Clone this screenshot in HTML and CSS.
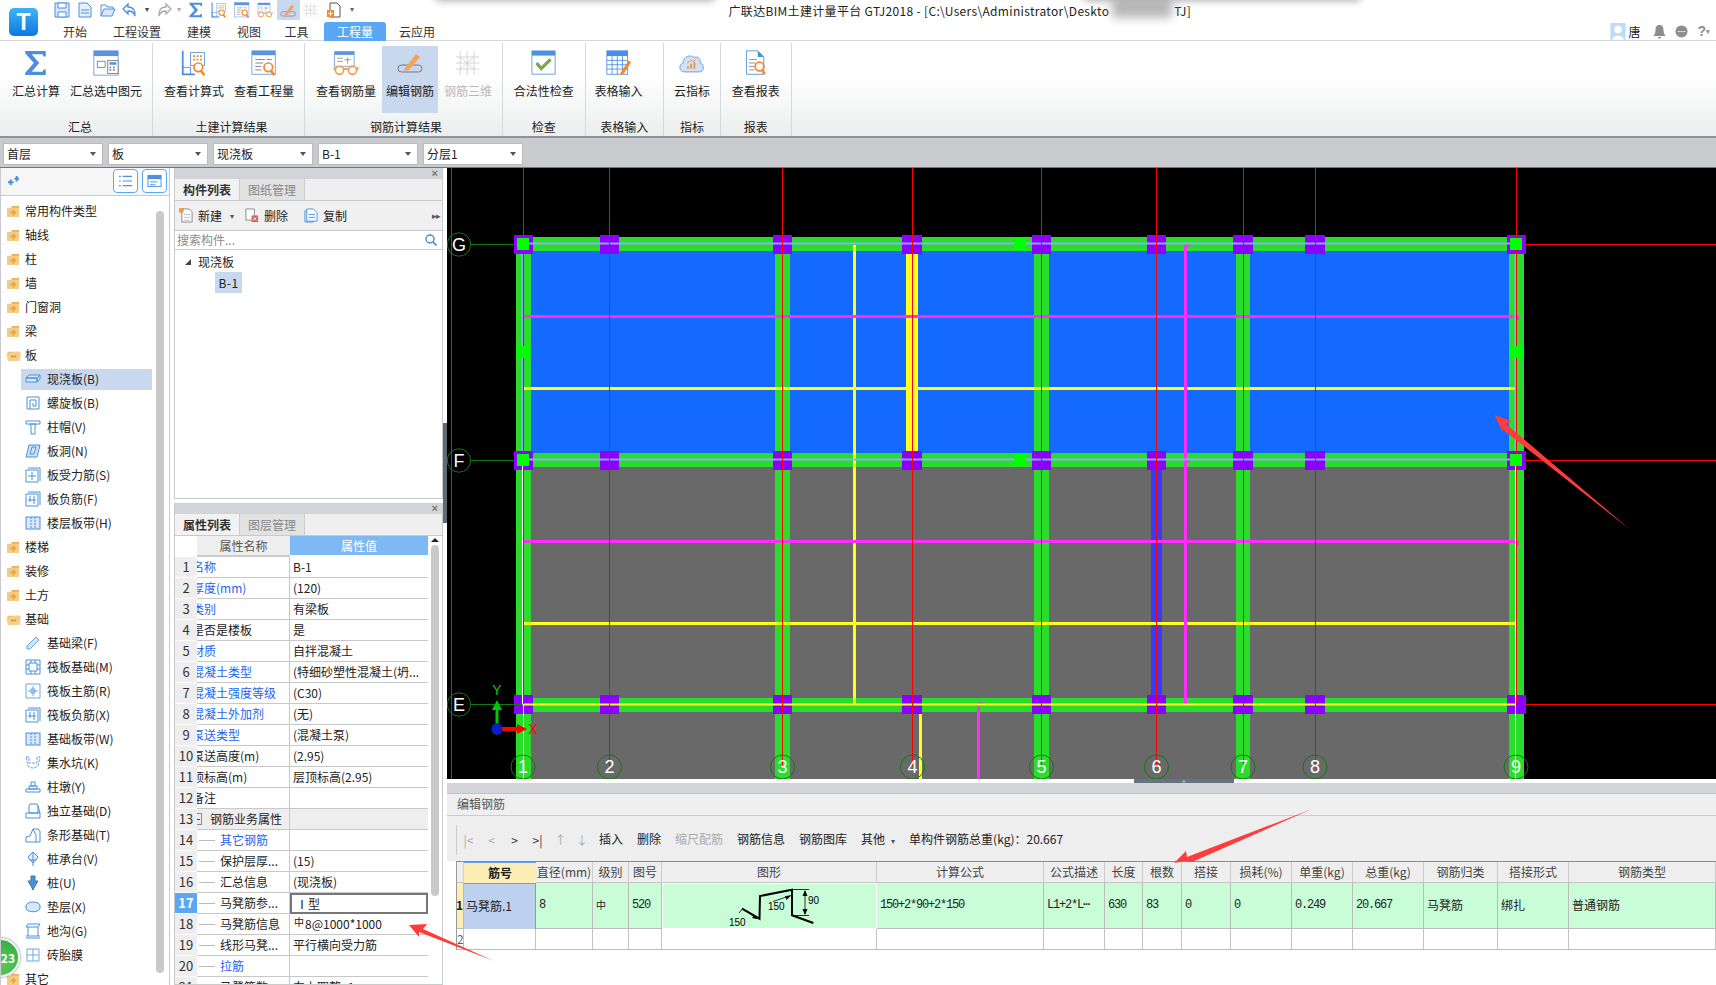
FILE: index.html
```html
<!DOCTYPE html>
<html lang="zh-CN">
<head>
<meta charset="utf-8">
<title>广联达BIM土建计量平台 GTJ2018</title>
<link rel="stylesheet" href="styles.css">
</head>
<body>
<svg class="defs" aria-hidden="true">
  <defs>
    <symbol id="folder" viewBox="0 0 16 14"><path d="M1 3h5V1h8v12H1z" fill="#f1cd85"/><path d="M6 3V1h8v2z" fill="#e3b461"/><path d="M7 5h2v2h2v2H9v2H7V9H5V7h2z" fill="#e8a33a"/></symbol>
    <symbol id="folder-open" viewBox="0 0 16 14"><path d="M2 3h13v3H2z" fill="#e3b461"/><path d="M0 4l13-1 3 0-1.500 10H2z" fill="#f3d18c"/><path d="M5 7h6v2H5z" fill="#dd9d3c"/></symbol>
    <symbol id="i-slab" viewBox="0 0 16 16"><path d="M1 7l3-3h11l-3 3zM1 7h11v4H1zM12 7v4l3-3V4" fill="#d8e8fa" stroke="#4a90d9"/></symbol>
    <symbol id="i-spiral" viewBox="0 0 16 16"><path d="M2 2h12v12H2zM5 14V5h6v6H8V8" fill="none" stroke="#4a90d9"/></symbol>
    <symbol id="i-cap" viewBox="0 0 16 16"><path d="M1 2h14v3H1zM5 5h6l-1 2v8H6V7z" fill="#fff" stroke="#4a90d9"/></symbol>
    <symbol id="i-hole" viewBox="0 0 16 16"><path d="M1 14l3-12h11l-3 12zM5 11l2-7h4l-2 7z" fill="#cfe2f7" stroke="#4a90d9"/></symbol>
    <symbol id="i-main" viewBox="0 0 16 16"><path d="M3 1h12v13M1 3h12v12H1zM3 9h8M7 5v8" fill="none" stroke="#4a90d9"/></symbol>
    <symbol id="i-neg" viewBox="0 0 16 16"><path d="M3 1h12v13M1 3h12v12H1zM3 9h8M5 5v6M9 5v8" fill="none" stroke="#4a90d9"/></symbol>
    <symbol id="i-band" viewBox="0 0 16 16"><rect x="1" y="2" width="14" height="12" fill="#d8e8fa" stroke="#4a90d9"/><path d="M6 2v12M10 2v12" stroke="#4a90d9" stroke-dasharray="2 1"/></symbol>
    <symbol id="i-beam" viewBox="0 0 16 16"><path d="M2 11L11 2l3 3-9 9H2z" fill="#cfe2f7" stroke="#6aa6e4"/></symbol>
    <symbol id="i-raft" viewBox="0 0 16 16"><path d="M1 1h14v14H1zM4 4h8v8H4zM1 6h3M1 10h3M12 6h3M12 10h3M6 1v3M10 1v3M6 12v3M10 12v3" fill="none" stroke="#4a90d9"/></symbol>
    <symbol id="i-raft2" viewBox="0 0 16 16"><path d="M1 1h14v14H1zM8 3v10M3 8h10M6 6h4v4H6z" fill="none" stroke="#6aa6e4"/></symbol>
    <symbol id="i-pit" viewBox="0 0 16 16"><path d="M1 2h3v6h8V2h3M1 2l2 9q5 4 10 0l2-9" fill="none" stroke="#6aa6e4" stroke-dasharray="3 1"/></symbol>
    <symbol id="i-pier" viewBox="0 0 16 16"><path d="M6 3h4v4H6zM4 7h8v3H4zM1 10h14v3H1z" fill="#fff" stroke="#4a90d9"/></symbol>
    <symbol id="i-indep" viewBox="0 0 16 16"><path d="M5 1h7l1 2v7H4V3zM1 10h14v5H1zM13 3l2 7" fill="#fff" stroke="#4a90d9"/></symbol>
    <symbol id="i-strip" viewBox="0 0 16 16"><path d="M1 15V10l4-1 3-7h5l2 2v11zM8 2l3 6v7" fill="#fff" stroke="#4a90d9"/></symbol>
    <symbol id="i-cap2" viewBox="0 0 16 16"><path d="M8 1l5 5-2 3H5L3 6zM8 1v14M5 9l3 3 3-3" fill="#e8f1fb" stroke="#4a90d9"/></symbol>
    <symbol id="i-pile" viewBox="0 0 16 16"><path d="M6 1h4v5h3l-3 5-2 4-2-4-3-5h3z" fill="#4a90d9" stroke="#3674b5"/></symbol>
    <symbol id="i-cush" viewBox="0 0 16 16"><ellipse cx="8" cy="7" rx="7" ry="4" fill="#d8e8fa" stroke="#4a90d9"/><path d="M1 7v2c0 5 14 5 14 0V7" fill="#d8e8fa" stroke="#4a90d9"/></symbol>
    <symbol id="i-trench" viewBox="0 0 16 16"><path d="M3 1h12l-2 3H1zM3 4v9M13 4v9M1 15h14M1 13h14" fill="none" stroke="#4a90d9"/></symbol>
    <symbol id="i-brick" viewBox="0 0 16 16"><path d="M2 2h12v12H2zM8 2v12M2 8h12" fill="none" stroke="#6aa6e4"/></symbol>

    <symbol id="sigma" viewBox="0 0 24 24"><path d="M2 1h19v5h-2l-1-2H8l7 8-7 8h10l1-2h2v5H2v-2l8-9-8-9z" fill="#4a8fe0"/></symbol>
    <symbol id="r-sumsel" viewBox="0 0 30 30"><rect x="1" y="1" width="28" height="28" fill="#fff" stroke="#6a9bd8"/><rect x="1" y="1" width="28" height="6" fill="#5b94dc"/><rect x="5" y="13" width="9" height="7" fill="none" stroke="#7a7a7a"/><rect x="17" y="12" width="12" height="15" fill="#fff" stroke="#777"/><rect x="19" y="14" width="8" height="3" fill="#5b94dc"/><path d="M19 20h2M23 20h2M19 23h2M23 23h2" stroke="#888" stroke-width="2"/></symbol>
    <symbol id="r-calc" viewBox="0 0 30 30"><path d="M2 1v27h14" fill="none" stroke="#4a8fe0" stroke-width="2"/><rect x="2" y="20" width="9" height="8" fill="none" stroke="#4a8fe0"/><rect x="11" y="3" width="16" height="15" fill="#fff" stroke="#5b94dc"/><path d="M14 7h2M18 7h2M22 7h2M14 11h2M18 11h2M22 11h2" stroke="#e87f2a" stroke-width="2"/><circle cx="20" cy="20" r="5" fill="#fff" stroke="#f08a2c" stroke-width="2"/><path d="M23 24l4 5" stroke="#f08a2c" stroke-width="3"/></symbol>
    <symbol id="r-qty" viewBox="0 0 30 30"><rect x="1" y="1" width="27" height="27" fill="#fff" stroke="#6a9bd8"/><rect x="1" y="1" width="27" height="5" fill="#5b94dc"/><path d="M5 11h11M5 15h9M5 19h7M5 23h7M18 11h6" stroke="#777"/><circle cx="20" cy="20" r="5" fill="#fff" stroke="#f08a2c" stroke-width="2"/><path d="M23 24l4 5" stroke="#f08a2c" stroke-width="3"/></symbol>
    <symbol id="r-rebar" viewBox="0 0 32 30"><rect x="2" y="1" width="24" height="18" fill="#fff" stroke="#6a9bd8"/><rect x="2" y="1" width="24" height="4" fill="#5b94dc"/><path d="M5 9h7M5 13h7M18 8v8M14 11h8" stroke="#888"/><circle cx="8" cy="24" r="5" fill="#fff" stroke="#f39a4c" stroke-width="2"/><circle cx="24" cy="24" r="5" fill="#fff" stroke="#f39a4c" stroke-width="2"/><path d="M13 23q3-2 6 0M3 24l-2-4M29 24l2-4" fill="none" stroke="#f39a4c" stroke-width="2"/></symbol>
    <symbol id="r-edit" viewBox="0 0 26 22"><rect x="1" y="13" width="24" height="7" rx="3.500" fill="none" stroke="#777"/><path d="M8 16L19 2l4 3-11 13-5 1z" fill="#f5a25c"/></symbol>
    <symbol id="r-3d" viewBox="0 0 30 30"><path d="M6 1v28M14 1v28M22 1v28M1 8h27M1 15h27M1 22h27M6 8l16 14M6 22L22 8" fill="none" stroke="#cfcfcf"/></symbol>
    <symbol id="r-check" viewBox="0 0 28 28"><rect x="1" y="1" width="25" height="25" fill="#fff" stroke="#6a9bd8"/><rect x="1" y="1" width="25" height="5" fill="#4a8fe0"/><path d="M6 14l5 6 10-10" fill="none" stroke="#7aa84a" stroke-width="3.500"/></symbol>
    <symbol id="r-table" viewBox="0 0 30 30"><rect x="1" y="1" width="24" height="27" fill="#fff" stroke="#4a8fe0"/><rect x="1" y="1" width="24" height="6" fill="#4a8fe0"/><path d="M1 12h24M1 17h24M1 22h24M7 7v21M13 7v21M19 7v21" stroke="#4a8fe0"/><path d="M17 26l9-14 3 2-9 14-4 1z" fill="#f08a2c"/></symbol>
    <symbol id="r-cloud" viewBox="0 0 32 28"><path d="M7 25C0 25-1 16 5 14 5 6 14 3 18 7c6-2 9 3 8 7 6 2 5 11-1 11z" fill="#cfe2f7" stroke="#5b94dc"/><path d="M11 21v-3M15 21v-6M19 21v-8" stroke="#f08a2c" stroke-width="2"/><path d="M10 14l5-3 3 1 3-3" fill="none" stroke="#f08a2c"/></symbol>
    <symbol id="r-report" viewBox="0 0 26 30"><path d="M2 1h13l7 7v20H2z" fill="#fff" stroke="#4a8fe0"/><path d="M15 1l7 7h-7z" fill="#4a8fe0"/><path d="M5 11h9M5 15h7M5 19h6M5 23h6" stroke="#888"/><circle cx="17" cy="19" r="5" fill="#fff" stroke="#f08a2c" stroke-width="2"/><path d="M20 23l3 5" stroke="#f08a2c" stroke-width="3"/></symbol>
  </defs>
</svg>

<header class="header">
  <div class="logo-box">
    <div class="logo"><span class="logo-t">T</span></div>
  </div>
  <div class="head-right">
    <div class="quick">
      <svg class="qb" viewBox="0 0 16 16"><path d="M1 1h14v14H1z" fill="#d8e8fa" stroke="#4a8fe0"/><path d="M4 1h8v5H4zM4 10h8v5H4z" fill="#fff" stroke="#4a8fe0"/></svg>
      <svg class="qb" viewBox="0 0 16 16"><path d="M2 1h8l4 4v10H2z" fill="#e6f0fb" stroke="#4a8fe0"/><path d="M4 8h8M4 11h8" stroke="#4a8fe0"/></svg>
      <svg class="qb" viewBox="0 0 16 16"><path d="M1 14V3h5l1 2h6v2" fill="#fff" stroke="#4a8fe0"/><path d="M1 14l3-7h11l-3 7z" fill="#d8e8fa" stroke="#4a8fe0"/></svg>
      <svg class="qb qb-narrow" viewBox="0 0 16 16"><path d="M6 2L1 7l5 5V9c4 0 6 1 7 5 1-5-2-9-7-9z" fill="#fff" stroke="#4a8fe0" stroke-width="1.300"/></svg>
      <span class="qcaret">▾</span>
      <svg class="qb" viewBox="0 0 16 16"><path d="M10 2l5 5-5 5V9C6 9 4 10 3 14 2 9 5 5 10 5z" fill="#fff" stroke="#aaa" stroke-width="1.300"/></svg>
      <span class="qcaret qcaret-light">▾</span>
      <svg class="qb qb-sigma"><use href="#sigma"/></svg>
      <svg class="qb"><use href="#r-calc"/></svg>
      <svg class="qb"><use href="#r-qty"/></svg>
      <svg class="qb"><use href="#r-rebar"/></svg>
      <span class="qb-on"><svg class="qb-in"><use href="#r-edit"/></svg></span>
      <svg class="qb"><use href="#r-3d"/></svg>
      <svg class="qb" viewBox="0 0 16 16"><path d="M4 1h7l3 3v11H4z" fill="#fff" stroke="#555"/><rect x="1" y="8" width="7" height="7" fill="#f08a2c"/><path d="M4.500 9v5M2 11.500h5" stroke="#fff"/></svg>
      <span class="qcaret qcaret-more">▾</span>
      <span class="title">广联达BIM土建计量平台 GTJ2018 - [C:\Users\Administrator\Deskto<span class="title-gap"></span>TJ]</span>
    </div>
    <div class="tabrow">
      <nav class="tabs">
        <span class="tab">开始</span><span class="tab">工程设置</span><span class="tab">建模</span><span class="tab">视图</span><span class="tab">工具</span><span class="tab tab-on">工程量</span><span class="tab">云应用</span>
      </nav>
      <div class="user">
        <svg class="avatar" viewBox="0 0 16 18"><rect width="16" height="18" fill="#bcdcfb"/><circle cx="8" cy="7" r="4" fill="#fff"/><path d="M2 18c0-6 12-6 12 0z" fill="#fff"/></svg>
        <span class="user-name">唐</span>
        <svg class="u-ico" viewBox="0 0 12 14"><path d="M6 0c3 0 4 2 4 5s1 4 2 6H0c1-2 2-3 2-6s1-5 4-5zM4 12h4l-2 2z" fill="#8d8d8d"/></svg>
        <svg class="u-ico" viewBox="0 0 14 14"><circle cx="7" cy="6.500" r="6.500" fill="#8d8d8d"/><path d="M3 6.500h2M6 6.500h2M9 6.500h2" stroke="#fff"/></svg>
        <span class="help">?<small>▾</small></span>
      </div>
    </div>
  </div>
</header>

<section class="ribbon">
  <div class="rgroup g1">
    <div class="rbtns"><div class="rbtn w56"><svg class="ric"><use href="#sigma"/></svg><span>汇总计算</span></div><div class="rbtn w84"><svg class="ric"><use href="#r-sumsel"/></svg><span>汇总选中图元</span></div></div>
    <div class="rlabel">汇总</div>
  </div>
  <div class="rgroup g2">
    <div class="rbtns"><div class="rbtn w70"><svg class="ric"><use href="#r-calc"/></svg><span>查看计算式</span></div><div class="rbtn w70"><svg class="ric"><use href="#r-qty"/></svg><span>查看工程量</span></div></div>
    <div class="rlabel">土建计算结果</div>
  </div>
  <div class="rgroup g3">
    <div class="rbtns"><div class="rbtn w72"><svg class="ric"><use href="#r-rebar"/></svg><span>查看钢筋量</span></div><div class="rbtn w56 rbtn-on"><svg class="ric"><use href="#r-edit"/></svg><span>编辑钢筋</span></div><div class="rbtn w60 rbtn-off"><svg class="ric"><use href="#r-3d"/></svg><span>钢筋三维</span></div></div>
    <div class="rlabel">钢筋计算结果</div>
  </div>
  <div class="rgroup g4">
    <div class="rbtns"><div class="rbtn wfull"><svg class="ric"><use href="#r-check"/></svg><span>合法性检查</span></div></div>
    <div class="rlabel">检查</div>
  </div>
  <div class="rgroup g5">
    <div class="rbtns"><div class="rbtn w66"><svg class="ric"><use href="#r-table"/></svg><span>表格输入</span></div></div>
    <div class="rlabel">表格输入</div>
  </div>
  <div class="rgroup g6">
    <div class="rbtns"><div class="rbtn wfull"><svg class="ric"><use href="#r-cloud"/></svg><span>云指标</span></div></div>
    <div class="rlabel">指标</div>
  </div>
  <div class="rgroup g7">
    <div class="rbtns"><div class="rbtn wfull"><svg class="ric"><use href="#r-report"/></svg><span>查看报表</span></div></div>
    <div class="rlabel">报表</div>
  </div>
</section>

<div class="combos">
  <div class="combo">首层</div>
  <div class="combo">板</div>
  <div class="combo">现浇板</div>
  <div class="combo">B-1</div>
  <div class="combo">分层1</div>
</div>

<main class="main">
  <aside class="tree">
    <div class="tree-top">
      <svg class="pin" viewBox="0 0 14 12"><path d="M1 8h6M4 5v6M8 4h5M10.500 1v6" stroke="#4a8fe0" stroke-width="2.200"/></svg>
      <span class="view-btn"><svg viewBox="0 0 16 14"><path d="M1 2h2M5 2h10M1 7h2M5 7h10M1 12h2M5 12h10" stroke="#4a8fe0" stroke-width="1.300"/></svg></span>
      <span class="view-btn"><svg viewBox="0 0 16 14"><rect x="1" y="1" width="14" height="12" fill="#fff" stroke="#4a8fe0"/><rect x="1" y="1" width="14" height="4" fill="#4a8fe0"/><path d="M3 8h8M3 11h6" stroke="#4a8fe0"/></svg></span>
    </div>
    <div class="t-list">
      <div class="t-row"><svg class="t-f"><use href="#folder"/></svg>常用构件类型</div>
      <div class="t-row"><svg class="t-f"><use href="#folder"/></svg>轴线</div>
      <div class="t-row"><svg class="t-f"><use href="#folder"/></svg>柱</div>
      <div class="t-row"><svg class="t-f"><use href="#folder"/></svg>墙</div>
      <div class="t-row"><svg class="t-f"><use href="#folder"/></svg>门窗洞</div>
      <div class="t-row"><svg class="t-f"><use href="#folder"/></svg>梁</div>
      <div class="t-row"><svg class="t-f"><use href="#folder-open"/></svg>板</div>
      <div class="t-child t-sel"><svg class="t-i"><use href="#i-slab"/></svg>现浇板(B)</div>
      <div class="t-child"><svg class="t-i"><use href="#i-spiral"/></svg>螺旋板(B)</div>
      <div class="t-child"><svg class="t-i"><use href="#i-cap"/></svg>柱帽(V)</div>
      <div class="t-child"><svg class="t-i"><use href="#i-hole"/></svg>板洞(N)</div>
      <div class="t-child"><svg class="t-i"><use href="#i-main"/></svg>板受力筋(S)</div>
      <div class="t-child"><svg class="t-i"><use href="#i-neg"/></svg>板负筋(F)</div>
      <div class="t-child"><svg class="t-i"><use href="#i-band"/></svg>楼层板带(H)</div>
      <div class="t-row"><svg class="t-f"><use href="#folder"/></svg>楼梯</div>
      <div class="t-row"><svg class="t-f"><use href="#folder"/></svg>装修</div>
      <div class="t-row"><svg class="t-f"><use href="#folder"/></svg>土方</div>
      <div class="t-row"><svg class="t-f"><use href="#folder-open"/></svg>基础</div>
      <div class="t-child"><svg class="t-i"><use href="#i-beam"/></svg>基础梁(F)</div>
      <div class="t-child"><svg class="t-i"><use href="#i-raft"/></svg>筏板基础(M)</div>
      <div class="t-child"><svg class="t-i"><use href="#i-raft2"/></svg>筏板主筋(R)</div>
      <div class="t-child"><svg class="t-i"><use href="#i-neg"/></svg>筏板负筋(X)</div>
      <div class="t-child"><svg class="t-i"><use href="#i-band"/></svg>基础板带(W)</div>
      <div class="t-child"><svg class="t-i"><use href="#i-pit"/></svg>集水坑(K)</div>
      <div class="t-child"><svg class="t-i"><use href="#i-pier"/></svg>柱墩(Y)</div>
      <div class="t-child"><svg class="t-i"><use href="#i-indep"/></svg>独立基础(D)</div>
      <div class="t-child"><svg class="t-i"><use href="#i-strip"/></svg>条形基础(T)</div>
      <div class="t-child"><svg class="t-i"><use href="#i-cap2"/></svg>桩承台(V)</div>
      <div class="t-child"><svg class="t-i"><use href="#i-pile"/></svg>桩(U)</div>
      <div class="t-child"><svg class="t-i"><use href="#i-cush"/></svg>垫层(X)</div>
      <div class="t-child"><svg class="t-i"><use href="#i-trench"/></svg>地沟(G)</div>
      <div class="t-child"><svg class="t-i"><use href="#i-brick"/></svg>砖胎膜</div>
      <div class="t-row"><svg class="t-f"><use href="#folder"/></svg>其它</div>
    </div>
    <div class="t-scroll"></div>
    <div class="badge">23</div>
  </aside>

  <section class="mid">
    <div class="panel panel-top">
      <div class="p-head">×</div>
      <div class="p-tabs"><span class="p-tab p-tab-on">构件列表</span><span class="p-tab">图纸管理</span></div>
      <div class="p-tools">
        <svg class="p-ico" viewBox="0 0 15 16"><path d="M3 1h8l3 3v11H3z" fill="#fff" stroke="#888"/><path d="M5 7h7M5 10h7M5 13h7" stroke="#bbb"/><path d="M0 0h5v5H0z" fill="#f08a2c" opacity=".8"/></svg>
        <span class="p-t">新建</span><span class="p-caret">▾</span>
        <svg class="p-ico p-del" viewBox="0 0 15 16"><path d="M1 1h9v12H1z" fill="#fff" stroke="#888"/><rect x="7" y="8" width="7" height="7" fill="#e8554e"/><path d="M8.500 9.500l4 4m0-4l-4 4" stroke="#fff"/></svg>
        <span class="p-t">删除</span>
        <svg class="p-ico p-copy" viewBox="0 0 15 16"><path d="M1 3h2M1 3v12h9v-1" fill="none" stroke="#4a8fe0"/><path d="M3 1h7l4 4v9H3z" fill="#fff" stroke="#4a8fe0"/><path d="M5 7h7M5 10h7" stroke="#4a8fe0"/></svg>
        <span class="p-t">复制</span>
        <span class="p-more">▸▸</span>
      </div>
      <div class="p-search"><span>搜索构件...</span><svg class="p-mag" viewBox="0 0 12 12"><circle cx="5" cy="5" r="4" fill="none" stroke="#3a8fd0" stroke-width="1.400"/><path d="M8 8l3.500 3.500" stroke="#3a8fd0" stroke-width="1.600"/></svg></div>
      <div class="p-tree">
        <div class="pt-root"><span class="pt-tri"></span>现浇板</div>
        <div class="pt-leaf">B-1</div>
      </div>
    </div>

    <div class="panel panel-bot">
      <div class="p-head">×</div>
      <div class="p-tabs"><span class="p-tab p-tab-on">属性列表</span><span class="p-tab">图层管理</span></div>
      <div class="props">
        <div class="prop-head"><span class="pr-n pr-blank"></span><span class="ph-name">属性名称</span><span class="ph-val">属性值</span></div>
        <div class="pr"><span class="pr-n">1</span><span class="pr-k link"><b>名称</b></span><span class="pr-v">B-1</span></div>
        <div class="pr"><span class="pr-n">2</span><span class="pr-k link"><b>厚度(mm)</b></span><span class="pr-v">(120)</span></div>
        <div class="pr"><span class="pr-n">3</span><span class="pr-k link"><b>类别</b></span><span class="pr-v">有梁板</span></div>
        <div class="pr"><span class="pr-n">4</span><span class="pr-k"><b>是否是楼板</b></span><span class="pr-v">是</span></div>
        <div class="pr"><span class="pr-n">5</span><span class="pr-k link"><b>材质</b></span><span class="pr-v">自拌混凝土</span></div>
        <div class="pr"><span class="pr-n">6</span><span class="pr-k link"><b>混凝土类型</b></span><span class="pr-v">(特细砂塑性混凝土(坍...</span></div>
        <div class="pr"><span class="pr-n">7</span><span class="pr-k link"><b>混凝土强度等级</b></span><span class="pr-v">(C30)</span></div>
        <div class="pr"><span class="pr-n">8</span><span class="pr-k link"><b>混凝土外加剂</b></span><span class="pr-v">(无)</span></div>
        <div class="pr"><span class="pr-n">9</span><span class="pr-k link"><b>泵送类型</b></span><span class="pr-v">(混凝土泵)</span></div>
        <div class="pr"><span class="pr-n">10</span><span class="pr-k"><b>泵送高度(m)</b></span><span class="pr-v">(2.95)</span></div>
        <div class="pr"><span class="pr-n">11</span><span class="pr-k"><b>顶标高(m)</b></span><span class="pr-v">层顶标高(2.95)</span></div>
        <div class="pr"><span class="pr-n">12</span><span class="pr-k"><b>备注</b></span><span class="pr-v"></span></div>
        <div class="pr pr-group"><span class="pr-n">13</span><span class="pr-k pr-gk"><i class="pr-minus"></i>钢筋业务属性</span><span class="pr-v"></span></div>
        <div class="pr"><span class="pr-n">14</span><span class="pr-k pr-sub link">其它钢筋</span><span class="pr-v"></span></div>
        <div class="pr"><span class="pr-n">15</span><span class="pr-k pr-sub">保护层厚...</span><span class="pr-v">(15)</span></div>
        <div class="pr"><span class="pr-n">16</span><span class="pr-k pr-sub">汇总信息</span><span class="pr-v">(现浇板)</span></div>
        <div class="pr pr-active"><span class="pr-n">17</span><span class="pr-k pr-sub">马凳筋参...</span><span class="pr-v">Ⅰ型</span></div>
        <div class="pr"><span class="pr-n">18</span><span class="pr-k pr-sub">马凳筋信息</span><span class="pr-v"><sup class="rebar-mark">中</sup>8@1000*1000</span></div>
        <div class="pr"><span class="pr-n">19</span><span class="pr-k pr-sub">线形马凳...</span><span class="pr-v">平行横向受力筋</span></div>
        <div class="pr"><span class="pr-n">20</span><span class="pr-k pr-sub link">拉筋</span><span class="pr-v"></span></div>
        <div class="pr"><span class="pr-n">21</span><span class="pr-k pr-sub">马凳筋数...</span><span class="pr-v">向上取整+1</span></div>
        <div class="p-scroll"></div>
        <div class="p-scroll-up"></div>
      </div>
    </div>
  </section>

  <div class="vsplit"><div class="vsplit-grip"></div></div>

  <section class="work">
    <svg class="cad" viewBox="447 168 1269 611" preserveAspectRatio="none">
      <rect class="c-blue" x="531" y="251" width="978" height="202"/>
      <rect class="c-gray" x="531" y="467" width="978" height="312"/>
      <g class="c-beam">
        <rect x="516" y="237" width="1008" height="14"/>
        <rect x="516" y="453" width="1008" height="14"/>
        <rect x="516" y="698" width="1008" height="14"/>
        <rect x="516" y="237" width="15" height="542"/>
        <rect x="775" y="237" width="15" height="542"/>
        <rect x="1034" y="237" width="15" height="542"/>
        <rect x="1236" y="237" width="14" height="542"/>
        <rect x="1509" y="237" width="15" height="542"/>
      </g>
      <rect class="c-rblue" x="1151" y="467" width="11" height="231"/>
      <rect class="c-yellow" x="906" y="251" width="12" height="202"/>
      <g class="c-ln-y">
        <line x1="524" y1="388.500" x2="1515" y2="388.500"/>
        <line x1="524" y1="623.500" x2="1515" y2="623.500"/>
        <line x1="854.500" y1="245" x2="854.500" y2="704"/>
        <line x1="920.500" y1="705" x2="920.500" y2="779"/>
      </g>
      <g class="c-ln-m">
        <line x1="524" y1="316.500" x2="1518" y2="316.500"/>
        <line x1="524" y1="541.500" x2="1518" y2="541.500"/>
        <line x1="1185.500" y1="245" x2="1185.500" y2="704"/>
        <line x1="978.500" y1="704" x2="978.500" y2="779"/>
      </g>
      <path class="c-tick" d="M1185 245.500h5M1185 461.500h5M1185 703.500h5M978 703.500h6M1518 316v4M1518 541v4"/>
      <g class="c-ln-s">
        <line x1="522.500" y1="244" x2="522.500" y2="460"/>
        <line x1="1515.500" y1="244" x2="1515.500" y2="460"/>
      </g>
      <g class="c-col">
        <rect x="514" y="235" width="19" height="19"/><rect x="600" y="235" width="19" height="19"/><rect x="773" y="235" width="19" height="19"/><rect x="902" y="235" width="20" height="19"/><rect x="1032" y="235" width="19" height="19"/><rect x="1147" y="235" width="19" height="19"/><rect x="1233" y="235" width="20" height="19"/><rect x="1305" y="235" width="20" height="19"/><rect x="1507" y="235" width="19" height="19"/>
        <rect x="514" y="451" width="19" height="19"/><rect x="600" y="451" width="19" height="19"/><rect x="773" y="451" width="19" height="19"/><rect x="902" y="451" width="20" height="19"/><rect x="1032" y="451" width="19" height="19"/><rect x="1147" y="451" width="19" height="19"/><rect x="1233" y="451" width="20" height="19"/><rect x="1305" y="451" width="20" height="19"/><rect x="1507" y="451" width="19" height="19"/>
        <rect x="514" y="695" width="19" height="19"/><rect x="600" y="695" width="19" height="19"/><rect x="773" y="695" width="19" height="19"/><rect x="902" y="695" width="20" height="19"/><rect x="1032" y="695" width="19" height="19"/><rect x="1147" y="695" width="19" height="19"/><rect x="1233" y="695" width="20" height="19"/><rect x="1305" y="695" width="20" height="19"/><rect x="1507" y="695" width="19" height="19"/>
      </g>
      <g class="c-ln-s">
        <line x1="524" y1="243.500" x2="1516" y2="243.500"/>
        <line x1="524" y1="459.500" x2="1516" y2="459.500"/>
      </g>
      <line class="c-y2" x1="522.500" y1="704.500" x2="1516" y2="704.500"/>
      <line class="c-y1" x1="523.500" y1="704" x2="523.500" y2="779"/>
      <line class="c-y1" x1="1515.500" y1="704" x2="1515.500" y2="779"/>
      <line class="c-w1" x1="522.500" y1="460" x2="522.500" y2="704"/>
      <line class="c-w1" x1="1515.500" y1="460" x2="1515.500" y2="704"/>
      <g class="c-red">
        <line x1="523.500" y1="168" x2="523.500" y2="704"/><line x1="609.500" y1="168" x2="609.500" y2="766"/><line x1="782.500" y1="168" x2="782.500" y2="766"/><line x1="912.500" y1="168" x2="912.500" y2="766"/><line x1="1041.500" y1="168" x2="1041.500" y2="766"/><line x1="1156.500" y1="168" x2="1156.500" y2="766"/><line x1="1243.500" y1="168" x2="1243.500" y2="766"/><line x1="1315.500" y1="168" x2="1315.500" y2="766"/><line x1="1516.500" y1="168" x2="1516.500" y2="704"/>
        <line x1="1526" y1="244.500" x2="1716" y2="244.500"/><line x1="1526" y1="460.500" x2="1716" y2="460.500"/><line x1="1526" y1="704.500" x2="1716" y2="704.500"/>
      </g>
      <g class="c-pt">
        <rect x="517" y="238" width="12" height="12"/><rect x="517" y="454" width="12" height="12"/><rect x="516.500" y="346" width="13" height="12"/>
        <rect x="1014" y="238" width="12" height="12"/><rect x="1014" y="454" width="12" height="12"/>
        <rect x="1510" y="238" width="12" height="12"/><rect x="1510" y="454" width="12" height="12"/><rect x="1510" y="346" width="13" height="12"/>
      </g>
      <g class="c-dgreen">
        <line x1="451.500" y1="168" x2="451.500" y2="779"/>
        <line x1="471" y1="244.500" x2="514" y2="244.500"/><line x1="471" y1="460.500" x2="514" y2="460.500"/><line x1="471" y1="704.500" x2="522" y2="704.500"/>
      </g>
      <g class="c-bub">
        <circle cx="459" cy="244.500" r="11.700"/><circle cx="459" cy="460.500" r="11.700"/><circle cx="459" cy="704.500" r="11.700"/>
        <circle cx="523" cy="767" r="12"/><circle cx="609.500" cy="767" r="12"/><circle cx="782.500" cy="767" r="12"/><circle cx="912.500" cy="767" r="12"/><circle cx="1041.500" cy="767" r="12"/><circle cx="1156.500" cy="767" r="12"/><circle cx="1243" cy="767" r="12"/><circle cx="1315" cy="767" r="12"/><circle cx="1516" cy="767" r="12"/>
      </g>
      <g class="c-txt">
        <text x="459" y="251">G</text><text x="459" y="467">F</text><text x="459" y="711">E</text>
        <text x="523" y="773">1</text><text x="609.500" y="773">2</text><text x="782.500" y="773">3</text><text x="912.500" y="773">4</text><text x="1041.500" y="773">5</text><text x="1156.500" y="773">6</text><text x="1243" y="773">7</text><text x="1315" y="773">8</text><text x="1516" y="773">9</text>
      </g>
      <rect class="c-axg" x="495.500" y="706" width="3" height="22"/>
      <path class="c-axg" d="M497 700l5 10h-10z"/>
      <rect class="c-axr" x="497" y="727" width="20" height="4"/>
      <path class="c-axr" d="M527 729l-10 5v-10z"/>
      <ellipse class="c-axb" cx="497" cy="729" rx="5.500" ry="6"/>
      <text class="c-lbl-y" x="497" y="695">Y</text>
      <text class="c-lbl-x" x="533" y="734">X</text>
    </svg>
    <div class="hsplit"><div class="hsplit-grip">▾</div></div>

    <section class="editor">
      <div class="e-head"></div>
      <div class="e-title">编辑钢筋</div>
      <div class="e-tools">
        <span class="e-grip"></span>
        <span class="e-nav e-dis">|&lt;</span><span class="e-nav e-dis">&lt;</span><span class="e-nav">&gt;</span><span class="e-nav">&gt;|</span><span class="e-nav e-dis">↑</span><span class="e-nav e-dis e-nav-s">↓</span>
        <div class="e-items">
          <span>插入</span><span>删除</span><span class="e-dis">缩尺配筋</span><span>钢筋信息</span><span>钢筋图库</span><span>其他<i class="e-caret">▾</i></span><span class="e-sum">单构件钢筋总重(kg)：20.667</span>
        </div>
      </div>
      <div class="e-body">
        <div class="grid">
          <div class="g-h g-rn"></div><div class="g-h g-first">筋号</div><div class="g-h">直径(mm)</div><div class="g-h">级别</div><div class="g-h">图号</div><div class="g-h">图形</div><div class="g-h">计算公式</div><div class="g-h">公式描述</div><div class="g-h">长度</div><div class="g-h">根数</div><div class="g-h">搭接</div><div class="g-h">损耗(%)</div><div class="g-h">单重(kg)</div><div class="g-h">总重(kg)</div><div class="g-h">钢筋归类</div><div class="g-h">搭接形式</div><div class="g-h">钢筋类型</div>

          <div class="g-c g-rn1">1</div><div class="g-c g-name">马凳筋.1</div><div class="g-c g-m">8</div><div class="g-c g-mark">中</div><div class="g-c g-m">520</div>
          <div class="g-c g-shape">
            <svg class="shape" viewBox="0 0 213 44">
              <path class="s-bar" d="M79 24.700L96.500 34.700 97 12 129 5.700V31.300L150.300 39"/>
              <path class="s-dim" d="M129 5.500H146M129 31.500H146M142 7V30M110 17.500L128 11.500M76 29L80 24M84 27L94 35"/>
              <path class="s-head" d="M142 6l-2.500 6h5zM142 31l-2.500-6h5zM128 11.500l-6 .500 1.500 4zM94 35l-5-1 2-3z"/>
              <text class="s-txt" x="145" y="20">90</text>
              <text class="s-txt" x="105" y="26">150</text>
              <text class="s-txt" x="66" y="42">150</text>
            </svg>
          </div>
          <div class="g-c g-m">150+2*90+2*150</div><div class="g-c g-m">L1+2*L⋯</div><div class="g-c g-m">630</div><div class="g-c g-m">83</div><div class="g-c g-m">0</div><div class="g-c g-m">0</div><div class="g-c g-m">0.249</div><div class="g-c g-m">20.667</div><div class="g-c">马凳筋</div><div class="g-c">绑扎</div><div class="g-c">普通钢筋</div>

          <div class="g-e g-rn2">2</div><div class="g-e"></div><div class="g-e"></div><div class="g-e"></div><div class="g-e"></div><div class="g-e"></div><div class="g-e"></div><div class="g-e"></div><div class="g-e"></div><div class="g-e"></div><div class="g-e"></div><div class="g-e"></div><div class="g-e"></div><div class="g-e"></div><div class="g-e"></div><div class="g-e"></div><div class="g-e"></div>
        </div>
      </div>
    </section>
  </section>
</main>

<div class="blur-a"></div>
<div class="blur-b"></div>
<div class="blur-c"></div>
<svg class="marks" viewBox="0 0 1716 985">
  <path d="M1494.500 415L1511.500 421 1506 424 1630 529.500 1502 429 1502.500 432z"/>
  <path d="M1174 863L1186 851 1187 857 1312 809 1192 862 1185 861z"/>
  <path d="M409 925L427 924 423 929 494 961 419 932 419 937z"/>
</svg>
</body>
</html>
```

FILE: styles.css
```css
* { box-sizing: border-box; }
html, body { margin: 0; padding: 0; }
body {
  width: 1716px;
  height: 985px;
  overflow: hidden;
  position: relative;
  background: #fff;
  color: #222;
  font: 12px/16px "Noto Sans CJK SC", "Noto Sans", sans-serif;
}
.defs { position: absolute; width: 0; height: 0; }

/* header */
.header { display: flex; height: 41px; border-bottom: 1px solid #d6d8da; background: #fff; }
.logo-box { width: 45px; height: 41px; padding: 8px 0 0 9px; }
.logo { width: 29px; height: 28px; border-radius: 5px; background: linear-gradient(#3bb4f5, #0d78e0); display: flex; justify-content: center; align-items: center; }
.logo-t { color: #fff; font: bold 23px/28px "Liberation Sans", sans-serif; }
.head-right { flex: 1; display: flex; flex-direction: column; }
.quick { height: 22px; display: flex; align-items: flex-start; padding-left: 5.5px; }
.qb { width: 16px; height: 16px; margin: 2px 3.5px 0; flex: none; }
.qb-narrow { margin-left: 2.5px; margin-right: 2.5px; }
.qb-sigma { margin-left: 6.5px; }
.qb-on { width: 23px; height: 20px; background: #c8d8ef; display: flex; align-items: center; justify-content: center; flex: none; }
.qb-in { width: 16px; height: 15px; }
.qcaret { width: 12px; text-align: center; font-size: 8px; line-height: 18px; color: #444; flex: none; }
.qcaret-light { width: 6px; color: #aaa; }
.qcaret-more { margin-left: 0; color: #666; }
.title { margin-left: 371px; white-space: nowrap; line-height: 22px; color: #222; letter-spacing: .33px; }
.title-gap { display: inline-block; width: 65px; }
.tabrow { display: flex; height: 19px; }
.tabs { display: grid; grid-template-columns: 60px 64px 60px 40px 55px 62px 62px; }
.tab { text-align: center; line-height: 19px; color: #333; }
.tab-on { background: #5aa8f3; color: #fff; border-radius: 3px 3px 0 0; }
.user { margin-left: auto; display: flex; align-items: center; padding-right: 6px; height: 19px; }
.avatar { width: 16px; height: 17px; }
.user-name { margin: 0 13px 0 2px; }
.u-ico { width: 13px; height: 14px; margin-right: 9px; }
.help { color: #8d8d8d; font: bold 14px/16px "Liberation Sans", sans-serif; }
.help small { font-size: 7px; vertical-align: 2px; }

/* ribbon */
.ribbon { display: flex; height: 97px; background: linear-gradient(#fff 35%, #eceeee 100%); border-bottom: 2px solid #8f9296; }
.rgroup { display: flex; flex-direction: column; height: 93px; margin-top: 2px; border-right: 1px solid #d6d8da; }
.g1 { width: 153px; padding-left: 8px; }
.g2 { width: 152px; padding-left: 6px; }
.g3 { width: 198px; padding-left: 5px; }
.g4 { width: 82.5px; }
.g5 { width: 78.5px; }
.g6 { width: 57px; }
.g7 { width: 70.5px; }
.rbtns { display: flex; height: 70px; padding-top: 3px; }
.rbtn { height: 67px; display: flex; flex-direction: column; align-items: center; white-space: nowrap; padding-top: 4px; }
.rbtn span { margin-top: 7px; }
.rbtn-on { background: #c8d8ef; }
.rbtn-off { color: #b9b9b9; }
.ric { width: 26px; height: 26px; }
.w56 { width: 56px; } .w60 { width: 60px; } .w66 { width: 66px; } .w70 { width: 70px; } .w72 { width: 72px; } .w84 { width: 84px; }
.wfull { width: 100%; }
.rlabel { text-align: center; margin-top: 6px; line-height: 16px; }

/* combos */
.combos { display: flex; gap: 5px; height: 30px; padding: 5px 0 0 3px; background: #c9cbcf; border-bottom: 1px solid #777; }
.combo { position: relative; width: 100px; height: 22px; background: #fff; border: 1px solid #bbb; padding-left: 3px; line-height: 20px; }
.combo::after { content: ""; position: absolute; right: 6px; top: 8px; border: 3px solid transparent; border-top: 4px solid #555; }

/* main */
.main { display: flex; height: 817px; overflow: hidden; }

/* tree */
.tree { position: relative; width: 170px; flex: none; border-right: 1px solid #c8cacd; border-left: 1px solid #c8cacd; overflow: hidden; background: #fff; }
.tree-top { display: flex; align-items: center; height: 28px; background: #f6f6f6; border-bottom: 1px solid #c8cacd; padding: 0 2px 2px 6px; }
.pin { width: 13px; height: 11px; }
.view-btn { width: 25px; height: 24px; border: 1px solid #5aa8f3; border-radius: 4px; background: #fff; margin-left: 4px; display: flex; align-items: center; justify-content: center; }
.view-btn:first-of-type { margin-left: auto; }
.view-btn svg { width: 15px; height: 14px; }
.t-list { padding-top: 3px; display: flex; flex-direction: column; }
.t-row { display: flex; align-items: center; height: 24px; flex: none; padding-left: 5px; gap: 4px; white-space: nowrap; }
.t-f { width: 15px; height: 13px; flex: none; }
.t-child { display: flex; align-items: center; height: 21px; flex: none; margin: 1.5px 0 1.5px 20px; width: 131px; padding-left: 4px; gap: 6px; white-space: nowrap; }
.t-sel { background: #c8d8ef; }
.t-i { width: 16px; height: 16px; flex: none; }
.t-scroll { position: absolute; left: 155px; top: 43px; width: 8px; height: 762px; border-radius: 4px; background: #c9c9c9; }
.badge { position: absolute; left: -20px; top: 770px; width: 39px; height: 39px; border-radius: 50%; background: radial-gradient(circle at 50% 70%, #5ecb58, #2aa93a); border: 2px solid #f2f2f2; box-shadow: 0 0 3px #777; color: #fff; font-weight: bold; text-align: right; line-height: 35px; padding-right: 3px; }

/* middle */
.mid { width: 273px; flex: none; padding-left: 4px; display: flex; flex-direction: column; background: #fff; }
.panel { border: 1px solid #c8cacd; border-top: 0; overflow: hidden; background: #fff; }
.panel-top { height: 331px; flex: none; }
.panel-bot { margin-top: 4px; flex: 1; }
.p-head { height: 11px; background: #d2d4d8; text-align: right; padding-right: 4px; color: #777; font: bold 11px/11px "Liberation Sans", sans-serif; }
.p-tabs { display: flex; height: 22px; background: #efefef; border-bottom: 1px solid #c8cacd; }
.p-tab { width: 65px; text-align: center; line-height: 21px; background: #e2e2e2; color: #888; border-right: 1px solid #ccc; }
.p-tab-on { background: #f2f2f2; color: #333; font-weight: bold; }
.p-tools { display: flex; align-items: center; height: 30px; background: #f0f0f0; border-bottom: 1px solid #c8cacd; padding-left: 4px; }
.p-ico { width: 14px; height: 15px; flex: none; }
.p-t { margin-left: 5px; }
.p-caret { margin-left: 8px; font-size: 8px; color: #555; }
.p-del { margin-left: 11px; }
.p-copy { margin-left: 16px; }
.p-more { margin-left: auto; font-size: 9px; color: #555; letter-spacing: -1px; padding-right: 2px; }
.p-search { display: flex; align-items: center; justify-content: space-between; height: 19px; border-bottom: 1px solid #c8cacd; padding: 0 5px 0 2px; color: #8b8b8b; }
.p-mag { width: 12px; height: 12px; }
.p-tree { padding-top: 3px; }
.pt-root { display: flex; align-items: center; height: 18px; padding-left: 10px; }
.pt-tri { width: 0; height: 0; margin-right: 7px; border-left: 6px solid transparent; border-bottom: 6px solid #444; }
.pt-leaf { margin: 1px 0 0 40px; width: 27px; height: 21px; background: #c8d8ef; text-align: center; line-height: 21px; letter-spacing: .5px; }

/* properties */
.props { position: relative; }
.prop-head { display: flex; height: 21px; }
.pr-blank { background: #fff !important; }
.ph-name { width: 93px; background: #eee; text-align: center; line-height: 19px; color: #555; border-bottom: 2px solid #ccc; }
.ph-val { width: 138px; background: #7eb8f5; color: #fff; text-align: center; line-height: 19px; border-bottom: 2px solid #fff; }
.pr { display: flex; height: 21px; line-height: 20px; }
.pr-n { width: 22px; flex: none; text-align: center; background: #eee; color: #333; border-bottom: 1px solid #fff; font-size: 13px; }
.pr-k { width: 93px; flex: none; border-right: 1px solid #c8c8c8; border-bottom: 1px solid #c8c8c8; overflow: hidden; white-space: nowrap; }
.pr-k b { font-weight: normal; display: block; margin-left: -5px; }
.pr-v { width: 138px; flex: none; padding-left: 3px; border-bottom: 1px solid #c8c8c8; white-space: nowrap; overflow: hidden; }
.link, .link b { color: #1d63f0; }
.pr-group .pr-k, .pr-group .pr-v { background: #eee; }
.pr-gk { padding-left: 13px; position: relative; }
.pr-minus { position: absolute; left: 0; top: 4px; width: 5px; height: 12px; border: 1px solid #888; border-left: 0; }
.pr-minus::after { content: ""; position: absolute; left: 0; top: 5px; width: 3px; height: 1px; background: #444; }
.pr-sub { padding-left: 23px; position: relative; }
.pr-sub::before { content: ""; position: absolute; left: 2px; top: 10px; width: 16px; height: 1px; background: #bbb; }
.pr-active .pr-n { background: #5aa8f3; color: #fff; font-weight: bold; }
.pr-active .pr-v { border: 2px solid #777; line-height: 17px; padding-left: 4px; }
.rebar-mark { font-size: 10px; line-height: 0; vertical-align: 3px; margin: 0 1px; }
.p-scroll { position: absolute; left: 256px; top: 9px; width: 8px; height: 351px; border-radius: 4px; background: #c9c9c9; }
.p-scroll-up { position: absolute; left: 256px; top: 2px; border: 4px solid transparent; border-bottom: 4px solid #222; border-top: 0; }

/* splitter */
.vsplit { width: 4px; flex: none; background: #fff; padding-top: 255px; }
.vsplit-grip { height: 100px; background: #5f6b75; }

/* work */
.work { flex: 1; display: flex; flex-direction: column; min-width: 0; }
.cad { display: block; width: 1269px; height: 611px; background: #000; flex: none; }
.c-blue { fill: #1469ff; }
.c-gray { fill: #696969; }
.c-beam { fill: #2bdd2b; }
.c-rblue { fill: #3a3aff; }
.c-yellow { fill: #ffff1e; }
.c-ln-y line { stroke: #ffff1e; stroke-width: 3; }
.c-ln-m line { stroke: #ff2bff; stroke-width: 3; }
.c-tick { stroke: #ff2bff; stroke-width: 2; fill: none; }
.c-ln-s line { stroke: #8caaff; stroke-width: 2; }
.c-col { fill: #8b00ff; }
.c-y2 { stroke: #ffff1e; stroke-width: 2; }
.c-y1 { stroke: #ffff1e; stroke-width: 1; }
.c-w1 { stroke: #fff; stroke-width: 1; }
.c-pt { fill: #00ff00; }
.c-red line { stroke: #f00; stroke-width: 1; }
.c-dgreen line { stroke: #117a11; stroke-width: 1; }
.c-bub circle { fill: none; stroke: #117a11; stroke-width: 1; }
.c-txt text { fill: #fff; font: 18px "Liberation Sans", sans-serif; text-anchor: middle; }
.c-axg { fill: #00c800; }
.c-axr { fill: #f00; }
.c-axb { fill: #0a1ec8; }
.c-lbl-y { fill: #00d000; font: 14px "Liberation Sans", sans-serif; text-anchor: middle; }
.c-lbl-x { fill: #f00; font: 14px "Liberation Sans", sans-serif; text-anchor: middle; }

.hsplit { height: 4px; flex: none; background: #fff; display: flex; }
.hsplit-grip { margin-left: 687px; width: 100px; height: 4px; background: #667380; color: #aaa; font-size: 7px; line-height: 4px; text-align: center; }

/* editor */
.editor { flex: 1; display: flex; flex-direction: column; min-height: 0; }
.e-head { height: 11px; background: #d2d4d8; border-bottom: 1px solid #c0c2c6; flex: none; }
.e-title { height: 22px; background: #efefef; border-bottom: 1px solid #c8cacd; line-height: 20px; padding-left: 10px; color: #555; flex: none; }
.e-tools { display: flex; align-items: center; height: 45px; background: #eee; flex: none; padding: 3px 0 0 9px; }
.e-grip { width: 1px; height: 30px; background: #ccc; }
.e-nav { width: 23px; text-align: center; color: #333; flex: none; }
.e-nav-s { width: 20px; }
.e-dis { color: #aaa; }
.e-items { display: flex; gap: 14px; margin-left: 7px; white-space: nowrap; }
.e-caret { font-style: normal; font-size: 8px; margin-left: 6px; color: #555; }
.e-body { flex: 1; background: #fff; padding-left: 9px; }
.grid { display: grid; grid-template-columns: 7px 72px 57px 36px 33px 215px 167px 61px 38px 39px 49px 61px 61px 71px 74px 71px 147px; grid-template-rows: 21px 46px 21px; border-top: 1px solid #8a8a8a; border-left: 1px solid #999; }
.g-h { background: #eee; text-align: center; line-height: 20px; color: #444; border-right: 1px solid #ccc; border-bottom: 1px solid #c4c4c4; white-space: nowrap; overflow: hidden; }
.g-rn { background: #eee; }
.g-first { background: #fdeeb6; color: #222; font-weight: bold; border: 1px solid #5aa8f3; border-width: 1px 0 0; }
.g-c { background: #c9fdd7; border-right: 1px solid #bbb; border-bottom: 1px solid #bbb; padding-left: 3px; line-height: 44px; white-space: nowrap; overflow: hidden; }
.g-m { font: 12px/44px "Liberation Mono", monospace; letter-spacing: -1.2px; }
.g-mark { font-size: 10px; }
.g-rn1 { background: #fdeeb6; padding: 0; font-weight: bold; overflow: visible; text-indent: -1px; }
.g-name { background: #bdd0ef; border: 1px solid #5aa8f3; border-width: 1px 1px 0 0; padding-left: 2px; overflow: visible; }
.g-shape { padding: 0; border: 1px solid #fff; line-height: 0; }
.shape { width: 213px; height: 44px; }
.s-bar { fill: none; stroke: #000; stroke-width: 2; }
.s-dim { fill: none; stroke: #000; stroke-width: .8; }
.s-head { fill: #000; }
.s-txt { font: 10px "Liberation Sans", sans-serif; fill: #000; }
.g-e { height: 21px; background: #fff; border-right: 1px solid #c4c4c4; border-bottom: 1px solid #bbb; }
.g-rn2 { line-height: 20px; color: #666; overflow: visible; }

/* overlays */
.blur-a { position: absolute; left: 1112px; top: -2px; width: 60px; height: 20px; background: #b8b8b8; filter: blur(5px); }
.blur-b { position: absolute; left: 436px; top: -8px; width: 278px; height: 8px; background: #999; filter: blur(4px); }
.blur-c { position: absolute; left: 1084px; top: -8px; width: 276px; height: 8px; background: #999; filter: blur(4px); }
.marks { position: absolute; left: 0; top: 0; width: 1716px; height: 985px; pointer-events: none; }
.marks path { fill: #ff3b3b; }
```
